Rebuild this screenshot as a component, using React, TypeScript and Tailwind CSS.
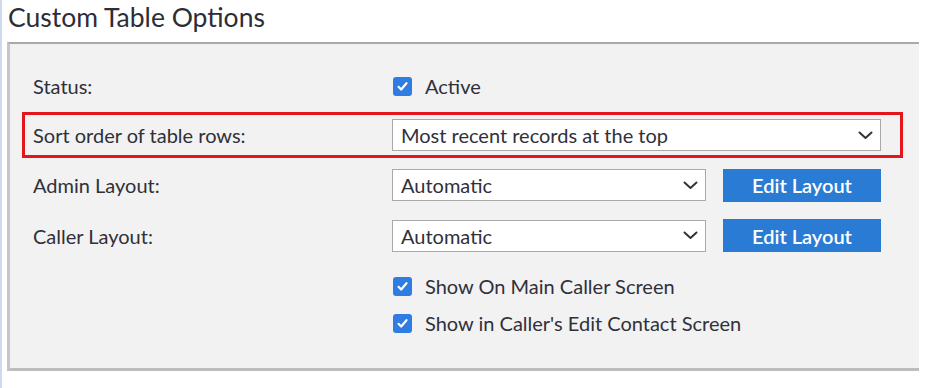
import React from "react";

const font = { fontFamily: "Lato, 'Open Sans', sans-serif" };

function Check() {
  return (
    <span className="flex h-[19px] w-[19px] items-center justify-center rounded-[3px] bg-[#2f7de2]">
      <svg width="13" height="13" viewBox="0 0 13 13">
        <path d="M2.5 6.8 L5.2 9.5 L10.5 3.2" fill="none" stroke="#fff" strokeWidth="2.2" strokeLinecap="round" strokeLinejoin="round" />
      </svg>
    </span>
  );
}

function Chevron() {
  return (
    <svg width="15" height="9" viewBox="0 0 15 9">
      <path d="M1.5 1.5 L7.5 7 L13.5 1.5" fill="none" stroke="#333" strokeWidth="2" strokeLinecap="round" strokeLinejoin="round" />
    </svg>
  );
}

function Select({ text, w }: { text: string; w: string }) {
  return (
    <div className={`flex h-[32px] items-center justify-between border border-[#a9a9a9] bg-white pl-[8px] pr-[7px] ${w}`}>
      <span>{text}</span>
      <Chevron />
    </div>
  );
}

function Button() {
  return (
    <div className="ml-[17px] flex h-[33px] w-[158px] items-center justify-center bg-[#2a7bd3] text-[20px] font-semibold text-white">
      Edit Layout
    </div>
  );
}

export default function App() {
  return (
    <div className="h-[388px] w-[936px] overflow-hidden border-l-2 border-[#cddaee] bg-white text-[#30303a]" style={font}>
      <div className="h-[42px] pl-[6px] pt-[1px] text-[26.5px] leading-[32px] text-[#2d2d35]">Custom Table Options</div>
      <div className="ml-[5px] h-[329px] w-[912px] border-l-[3px] border-t-2 border-b-[3px] border-l-[#c6c6c6] border-t-[#a9a9a9] border-b-[#bdbdbd] bg-[#f2f2f2] pl-[12px] pt-[22px] text-[20px]">
        <div className="w-[881px]">
          <div className="flex h-[40px] items-center pl-[11px]">
            <div className="w-[359px]">Status:</div>
            <div className="flex items-center pl-[1px]">
              <Check />
              <span className="ml-[13px]">Active</span>
            </div>
          </div>
          <div className="mt-[6px] flex h-[46px] items-center border-[3px] border-[#e3161c] pl-[8px]">
            <div className="w-[359px]">Sort order of table rows:</div>
            <Select text="Most recent records at the top" w="w-[489px]" />
          </div>
          <div className="mt-[2px] flex h-[50px] items-center pl-[11px]">
            <div className="w-[359px]">Admin Layout:</div>
            <Select text="Automatic" w="w-[314px]" />
            <Button />
          </div>
          <div className="flex h-[51px] items-center pl-[11px]">
            <div className="w-[359px]">Caller Layout:</div>
            <Select text="Automatic" w="w-[314px]" />
            <Button />
          </div>
          <div className="mt-[9px] flex h-[32px] items-center pl-[371px]">
            <Check />
            <span className="ml-[13px]">Show On Main Caller Screen</span>
          </div>
          <div className="mt-[5px] flex h-[32px] items-center pl-[371px]">
            <Check />
            <span className="ml-[13px]">Show in Caller's Edit Contact Screen</span>
          </div>
        </div>
      </div>
    </div>
  );
}
